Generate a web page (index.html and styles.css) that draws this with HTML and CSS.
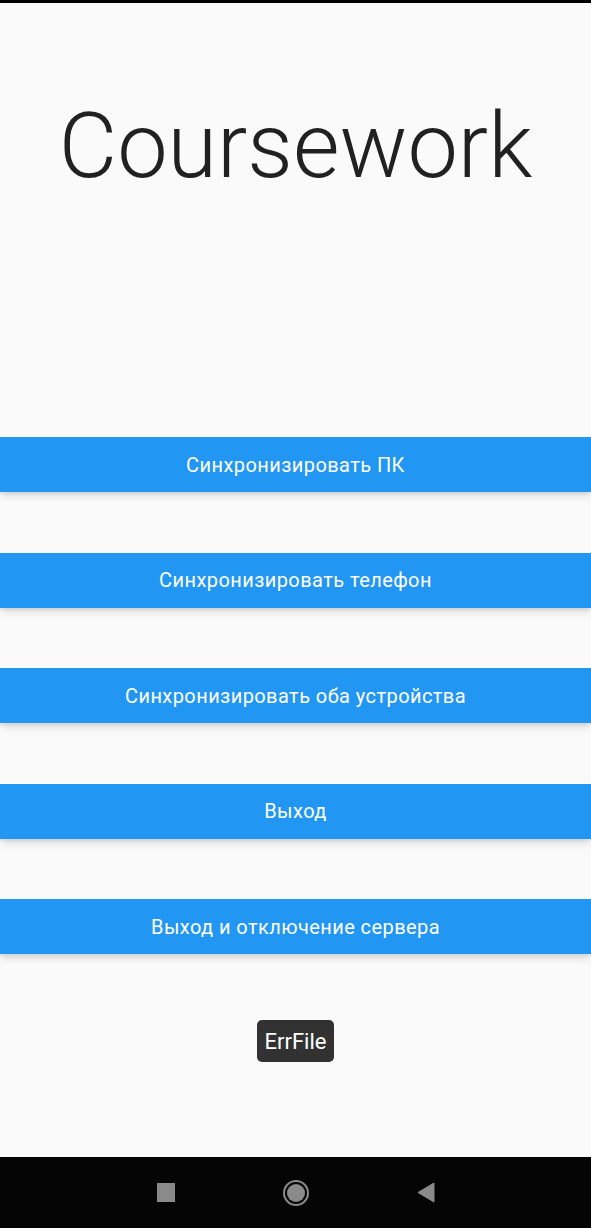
FILE: index.html
```html
<!DOCTYPE html>
<html lang="ru">
<head>
<meta charset="utf-8">
<title>Coursework</title>
<link rel="stylesheet" href="styles.css">
</head>
<body>
<div class="status"></div>
<main class="screen">
  <h1 class="title">Coursework</h1>
  <div class="actions">
    <button class="btn">Синхронизировать ПК</button>
    <button class="btn">Синхронизировать телефон</button>
    <button class="btn">Синхронизировать оба устройства</button>
    <button class="btn">Выход</button>
    <button class="btn">Выход и отключение сервера</button>
  </div>
  <div class="toast">ErrFile</div>
</main>
<nav class="nav">
  <span class="slot">
    <svg width="18" height="19" viewBox="0 0 18 19"><rect x="0" y="0" width="18" height="19" fill="#8a8a8a"/></svg>
  </span>
  <span class="slot">
    <svg width="28" height="28" viewBox="0 0 28 28"><circle cx="14" cy="14" r="12" fill="none" stroke="#8a8a8a" stroke-width="2"/><circle cx="14" cy="14" r="9" fill="#8a8a8a"/></svg>
  </span>
  <span class="slot">
    <svg width="18" height="21" viewBox="0 0 18 21"><path d="M17 1 L17 20 L1 10.5 Z" fill="#8a8a8a" stroke="#8a8a8a" stroke-width="1" stroke-linejoin="round"/></svg>
  </span>
</nav>
</body>
</html>
```

FILE: styles.css
```css
html, body {
  margin: 0;
  padding: 0;
}
body {
  width: 591px;
  height: 1228px;
  background: #fafafa;
  font-family: Roboto, "Liberation Sans", sans-serif;
  overflow: hidden;
}
.status {
  height: 3px;
  background: #000;
}
.screen {
  height: 1154px;
  display: flex;
  flex-direction: column;
  align-items: stretch;
}
.title {
  margin: 91px 0 0;
  font-size: 90px;
  font-weight: 300;
  line-height: 106px;
  color: #212121;
  text-align: center;
}
.actions {
  margin-top: 237px;
  display: flex;
  flex-direction: column;
  gap: 60.5px;
}
.btn {
  height: 55px;
  border: 0;
  margin: 0;
  padding: 0;
  background: #2196f3;
  color: #fff;
  font-family: Roboto, "Liberation Sans", sans-serif;
  font-size: 20px;
  font-weight: 400;
  letter-spacing: 0.42px;
  box-shadow: 0 6px 7px -1px rgba(0, 0, 0, 0.10), 0 2px 3px rgba(0, 0, 0, 0.07);
}
.toast {
  align-self: center;
  margin-top: 66px;
  height: 42px;
  padding: 0 7.5px;
  box-sizing: border-box;
  display: flex;
  align-items: center;
  background: #323232;
  color: #fff;
  border-radius: 5px;
  font-size: 22px;
}
.nav {
  height: 71px;
  background: #050505;
  display: flex;
  justify-content: center;
  align-items: center;
  gap: 90px;
}
.slot {
  width: 40px;
  display: flex;
  justify-content: center;
  align-items: center;
}
.slot svg {
  display: block;
}
```
